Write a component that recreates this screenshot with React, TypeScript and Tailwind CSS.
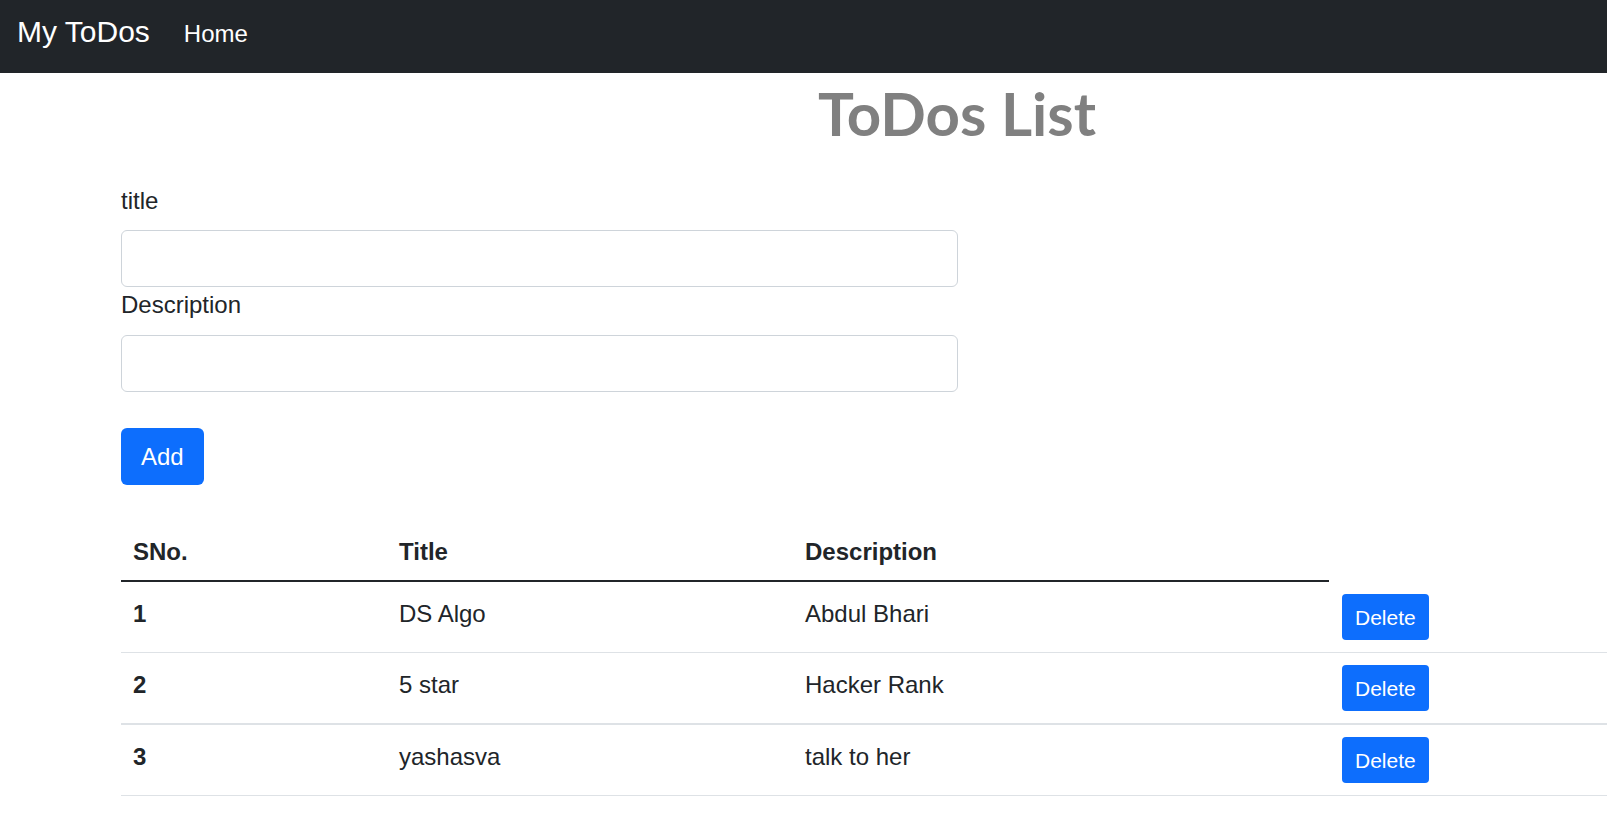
import React, { useState } from 'react';

type Todo = {
  sno: number;
  title: string;
  desc: string;
};

const initialTodos: Todo[] = [
  { sno: 1, title: 'DS Algo', desc: 'Abdul Bhari' },
  { sno: 2, title: '5 star', desc: 'Hacker Rank' },
  { sno: 3, title: 'yashasva', desc: 'talk to her' },
];

export default function App() {
  const [todos, setTodos] = useState<Todo[]>(initialTodos);
  const [title, setTitle] = useState('');
  const [desc, setDesc] = useState('');

  const addTodo = (e: React.FormEvent) => {
    e.preventDefault();
    if (!title || !desc) return;
    const sno = todos.length ? todos[todos.length - 1].sno + 1 : 1;
    setTodos([...todos, { sno, title, desc }]);
    setTitle('');
    setDesc('');
  };

  const onDelete = (todo: Todo) => {
    setTodos(todos.filter((t) => t !== todo));
  };

  return (
    <div className="min-h-screen w-full overflow-x-hidden bg-white font-['Liberation_Sans',Arial,sans-serif] text-[#212529]">
      {/* Navbar */}
      <nav className="flex h-[73px] items-baseline gap-[34px] bg-[#212529] px-[17px] pt-[17px]">
        <a href="#" className="text-[30px] leading-none text-white">
          My ToDos
        </a>
        <a href="#" className="text-[24px] leading-none text-white">
          Home
        </a>
      </nav>

      <div className="ml-[121px] w-[1672px]">
        <h1 className="mt-[10px] text-center font-['Lato','Liberation_Sans',sans-serif] text-[60px] font-bold leading-none text-[#808080]">
          ToDos List
        </h1>

        {/* Add form */}
        <form onSubmit={addTodo} className="mt-[40px] w-[837px]">
          <label htmlFor="title" className="mb-[11px] block text-[24px] leading-[36px]">
            title
          </label>
          <input
            id="title"
            type="text"
            value={title}
            onChange={(e) => setTitle(e.target.value)}
            className="block h-[57px] w-full rounded-[6px] border border-[#ced4da] px-[18px] text-[24px] outline-none"
          />
          <label htmlFor="desc" className="mb-[12px] block text-[24px] leading-[36px]">
            Description
          </label>
          <input
            id="desc"
            type="text"
            value={desc}
            onChange={(e) => setDesc(e.target.value)}
            className="block h-[57px] w-full rounded-[6px] border border-[#ced4da] px-[18px] text-[24px] outline-none"
          />
          <button
            type="submit"
            className="mt-[36px] h-[57px] rounded-[6px] bg-[#0d6efd] px-[20px] text-[24px] text-white"
          >
            Add
          </button>
        </form>

        {/* Todos table */}
        <table className="mt-[35px] w-full table-fixed border-separate border-spacing-0 text-left text-[24px]">
          <colgroup>
            <col className="w-[266px]" />
            <col className="w-[406px]" />
            <col className="w-[536px]" />
            <col className="w-[464px]" />
          </colgroup>
          <thead>
            <tr>
              <th className="border-b-2 border-[#212529] px-[12px] pt-[14px] pb-[10px] align-top font-bold leading-[36px]">SNo.</th>
              <th className="border-b-2 border-[#212529] px-[12px] pt-[14px] pb-[10px] align-top font-bold leading-[36px]">Title</th>
              <th className="border-b-2 border-[#212529] px-[12px] pt-[14px] pb-[10px] align-top font-bold leading-[36px]">Description</th>
            </tr>
          </thead>
          <tbody>
            {todos.map((todo, i) => {
              const line = i === 1 ? 'border-b-2' : 'border-b';
              return (
                <tr key={todo.sno}>
                  <td className={`${line} border-[#dee2e6] px-[12px] pt-[14px] align-top font-bold leading-[36px]`}>{todo.sno}</td>
                  <td className={`${line} border-[#dee2e6] px-[12px] pt-[14px] align-top leading-[36px]`}>{todo.title}</td>
                  <td className={`${line} border-[#dee2e6] px-[12px] pt-[14px] align-top leading-[36px]`}>{todo.desc}</td>
                  <td className={`${line} border-[#dee2e6] py-[12px] pr-[12px] pl-[13px] align-top`}>
                    <button
                      onClick={() => onDelete(todo)}
                      className="h-[46px] rounded-[4px] bg-[#0d6efd] px-[13px] text-[21px] leading-none text-white"
                    >
                      Delete
                    </button>
                  </td>
                </tr>
              );
            })}
          </tbody>
        </table>
      </div>
    </div>
  );
}
